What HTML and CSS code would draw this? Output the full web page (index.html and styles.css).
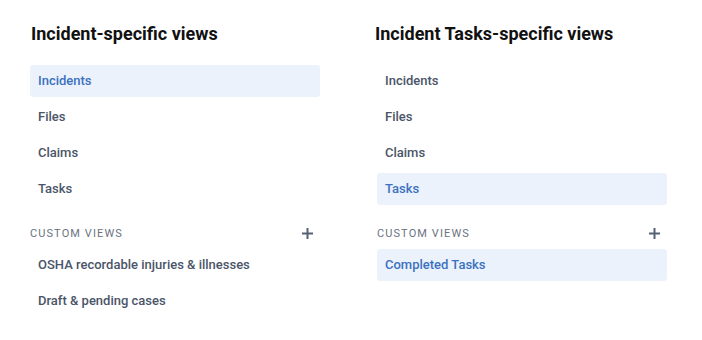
FILE: index.html
```html
<!DOCTYPE html>
<html lang="en">
<head>
    <meta charset="UTF-8">
    <meta name="viewport" content="width=device-width, initial-scale=1.0">
    <title>Views</title>
    <link rel="stylesheet" href="styles.css">
</head>
<body>

    <div class="page">

        <!-- Incident views -->
        <div class="column">
            <h2 class="column-title">Incident-specific views</h2>
            <ul class="view-list">
                <li class="view-item active">Incidents</li>
                <li class="view-item">Files</li>
                <li class="view-item">Claims</li>
                <li class="view-item">Tasks</li>
            </ul>
            <div class="section-header">
                <span>Custom views</span>
                <svg class="add-icon" width="11" height="11" viewBox="0 0 11 11">
                    <path d="M5.5 0V11M0 5.5H11" stroke="currentColor" stroke-width="2"/>
                </svg>
            </div>
            <ul class="view-list">
                <li class="view-item">OSHA recordable injuries &amp; illnesses</li>
                <li class="view-item">Draft &amp; pending cases</li>
            </ul>
        </div>

        <!-- Incident task views -->
        <div class="column column-right">
            <h2 class="column-title">Incident Tasks-specific views</h2>
            <ul class="view-list">
                <li class="view-item">Incidents</li>
                <li class="view-item">Files</li>
                <li class="view-item">Claims</li>
                <li class="view-item active">Tasks</li>
            </ul>
            <div class="section-header">
                <span>Custom views</span>
                <svg class="add-icon" width="11" height="11" viewBox="0 0 11 11">
                    <path d="M5.5 0V11M0 5.5H11" stroke="currentColor" stroke-width="2"/>
                </svg>
            </div>
            <ul class="view-list">
                <li class="view-item active">Completed Tasks</li>
            </ul>
        </div>

    </div>

</body>
</html>
```

FILE: styles.css
```css
body {
    font-family: Roboto, "Liberation Sans", sans-serif;
    background-color: #fff;
    margin: 0;
    padding: 0;
}

.page {
    display: flex;
    gap: 57px;
    padding: 22px 0 0 30px;
}

.column {
    width: 290px;
}

.column-title {
    margin: 0 0 19px 1px;
    font-size: 18px;
    line-height: 24px;
    font-weight: 700;
    color: #111;
}

.column-right .column-title {
    margin-left: -2px;
}

.view-list {
    list-style: none;
    margin: 0;
    padding: 0;
    display: flex;
    flex-direction: column;
    gap: 4px;
}

.view-item {
    height: 32px;
    line-height: 32px;
    padding: 0 8px;
    border-radius: 3px;
    font-size: 13px;
    font-weight: 500;
    color: #4a5568;
}

.view-item.active {
    background-color: #ecf2fb;
    color: #3b71be;
}

.section-header {
    display: flex;
    justify-content: space-between;
    align-items: center;
    height: 24px;
    margin: 16px 0 4px;
    padding-right: 7px;
    font-size: 11px;
    letter-spacing: 1.1px;
    text-transform: uppercase;
    color: #6b7280;
}

.add-icon {
    color: #566274;
}
```
